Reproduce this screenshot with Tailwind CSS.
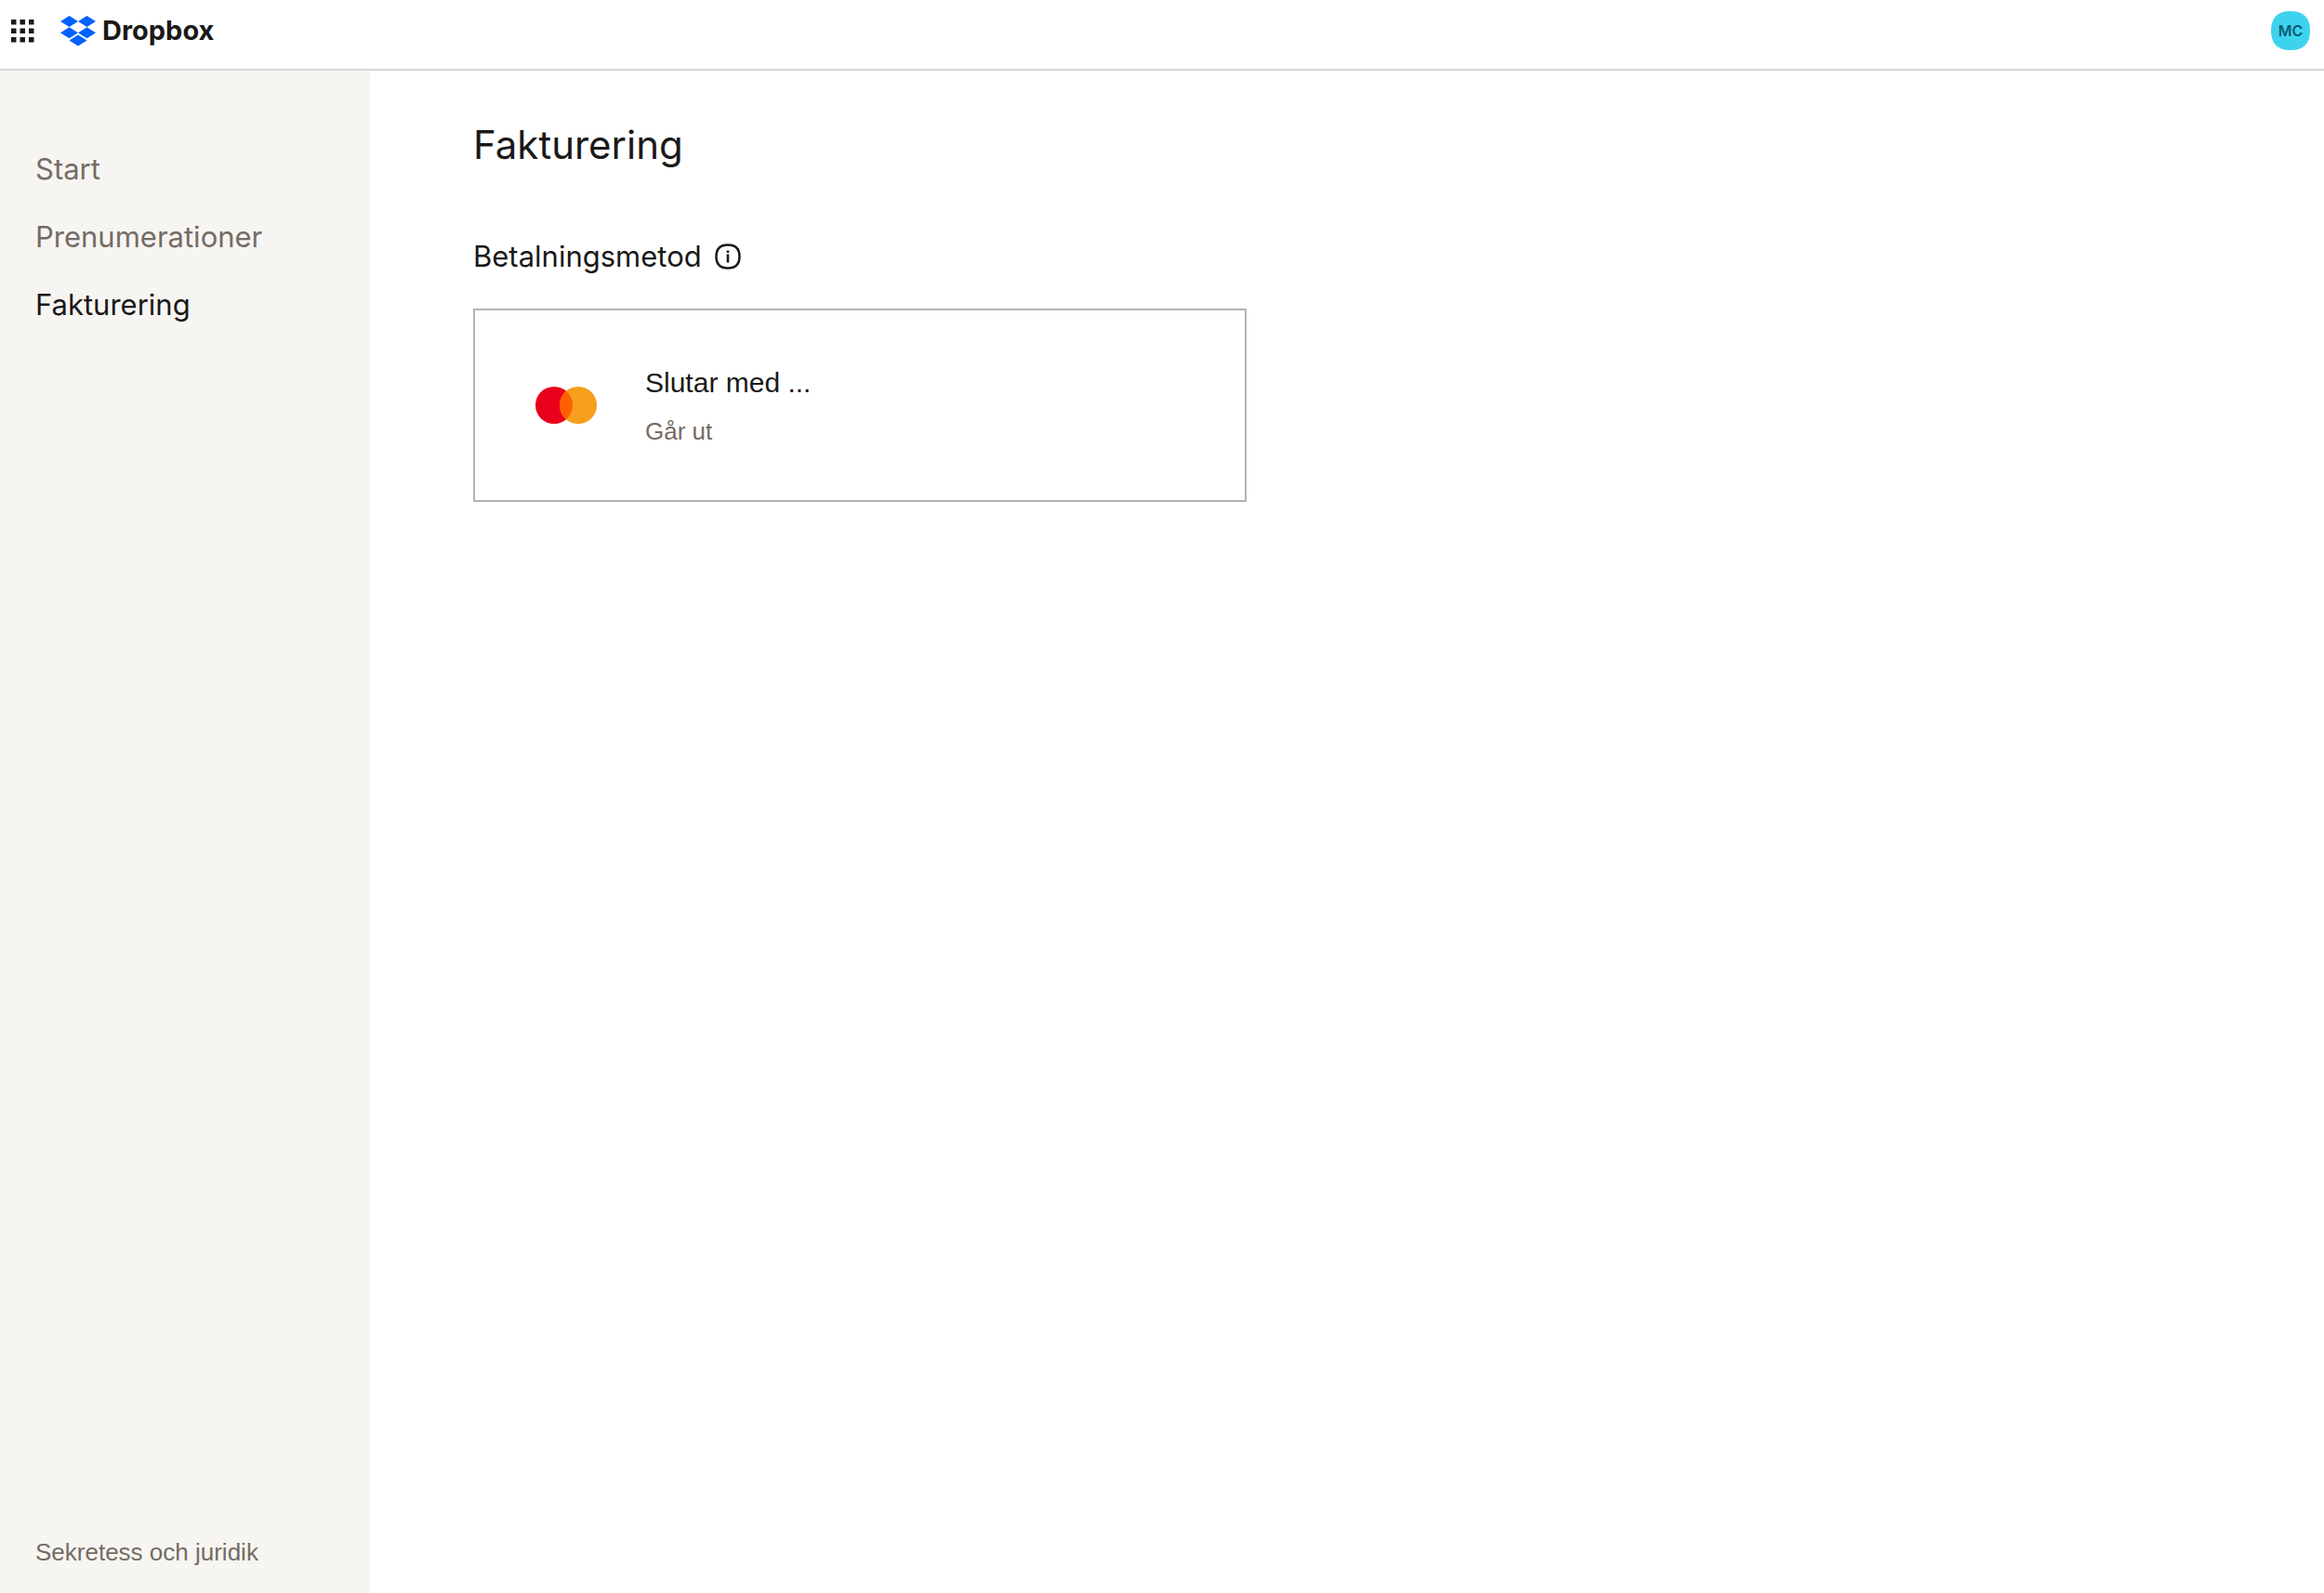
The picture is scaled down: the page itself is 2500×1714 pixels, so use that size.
<!DOCTYPE html>
<html lang="sv">
<head>
<meta charset="utf-8">
<meta name="viewport" content="width=device-width, initial-scale=1">
<title>Fakturering</title>
<script src="https://cdn.jsdelivr.net/npm/@tailwindcss/browser@4"></script>
</head>
<body class="flex min-h-screen flex-col bg-white font-['Inter',sans-serif] text-[#1a1918]">
  <header class="flex h-19 items-start justify-between border-b-2 border-[#d9d6d4] pr-[15px] pl-3">
    <div class="flex h-[66px] items-center gap-7">
      <button type="button" aria-label="Appar">
        <svg class="size-[25px]" viewBox="0 0 25 25" fill="#1a1918" aria-hidden="true">
          <path d="M0 0h5.500v5.500H0zM9.500 0h5.500v5.500H9.500zM19 0h5.500v5.500H19zM0 9.500h5.500v5.500H0zM9.500 9.500h5.500v5.500H9.500zM19 9.500h5.500v5.500H19zM0 19h5.500v5.500H0zM9.500 19h5.500v5.500H9.500zM19 19h5.500v5.500H19z"/>
        </svg>
      </button>
      <a href="#" class="flex items-center gap-[7px]">
        <svg class="h-[33px] w-[38px]" viewBox="0 0 38 33" fill="#0061fe" aria-hidden="true">
          <path d="M9.500 0 19 6l-9.500 6L0 6zM28.500 0 38 6l-9.500 6L19 6zM0 18.200l9.500-6 9.500 6-9.500 6zM28.500 12.200l9.500 6-9.500 6-9.500-6zM9.500 26.500l9.500-6 9.500 6-9.500 6z"/>
        </svg>
        <span class="text-[29px] leading-8 font-bold">Dropbox</span>
      </a>
    </div>
    <button type="button" aria-label="Konto MC" class="relative mt-3 grid size-[42px] place-items-center text-base font-semibold text-[#0b5a70]">
      <svg class="absolute inset-0 size-full" viewBox="0 0 42 42" fill="#3dd3ee" aria-hidden="true"><path d="M21 0C35 0 42 7 42 21S35 42 21 42 0 35 0 21 7 0 21 0z"/></svg>
      <span class="relative">MC</span>
    </button>
  </header>
  <div class="flex grow">
    <aside class="flex w-[398px] shrink-0 flex-col justify-between bg-[#f7f5f2] px-[38px] pt-[86px] pb-6 text-[#736c64]">
      <nav class="flex flex-col items-start gap-[33px] text-[31px] leading-10">
        <a href="#">Start</a>
        <a href="#">Prenumerationer</a>
        <a href="#" aria-current="page" class="text-[#1a1918]">Fakturering</a>
      </nav>
      <a href="#" class="font-['Liberation_Sans',sans-serif] text-[26px] leading-10">Sekretess och juridik</a>
    </aside>
    <main class="grow px-[111px] pt-14">
      <h1 class="text-[42px] leading-12">Fakturering</h1>
      <section class="mt-[76px]">
        <div class="flex items-center gap-[14px]">
          <h2 class="text-[31px] leading-10">Betalningsmetod</h2>
          <button type="button" aria-label="Information">
            <svg class="size-[28px]" viewBox="0 0 28 28" fill="none" aria-hidden="true">
              <path d="M14 1.500c8.500 0 12.500 4 12.500 12.500s-4 12.500-12.500 12.500S1.500 22.500 1.500 14 5.500 1.500 14 1.500z" stroke="#1a1918" stroke-width="2.500"/>
              <path d="M12.700 11.500h2.600v9h-2.600zM12.700 7.500h2.600v2.500h-2.600z" fill="#1a1918"/>
            </svg>
          </button>
        </div>
        <div class="mt-9 flex h-[208px] max-w-[832px] items-center gap-13 border-2 border-[#b5b3b0] px-[65px] font-['Liberation_Sans',sans-serif]">
          <svg class="h-10 w-[66px] shrink-0" viewBox="0 0 66 40" role="img" aria-label="Mastercard">
            <circle cx="20" cy="20" r="20" fill="#eb001b"/>
            <circle cx="46" cy="20" r="20" fill="#f79e1b"/>
            <path d="M33 4.800a20 20 0 0 1 0 30.400 20 20 0 0 1 0-30.400z" fill="#ff5f00"/>
          </svg>
          <div>
            <p class="text-[30px] leading-12">Slutar med ...</p>
            <p class="mt-2 text-[26px] leading-10 text-[#736c64]">Går ut</p>
          </div>
        </div>
      </section>
    </main>
  </div>
</body>
</html>
